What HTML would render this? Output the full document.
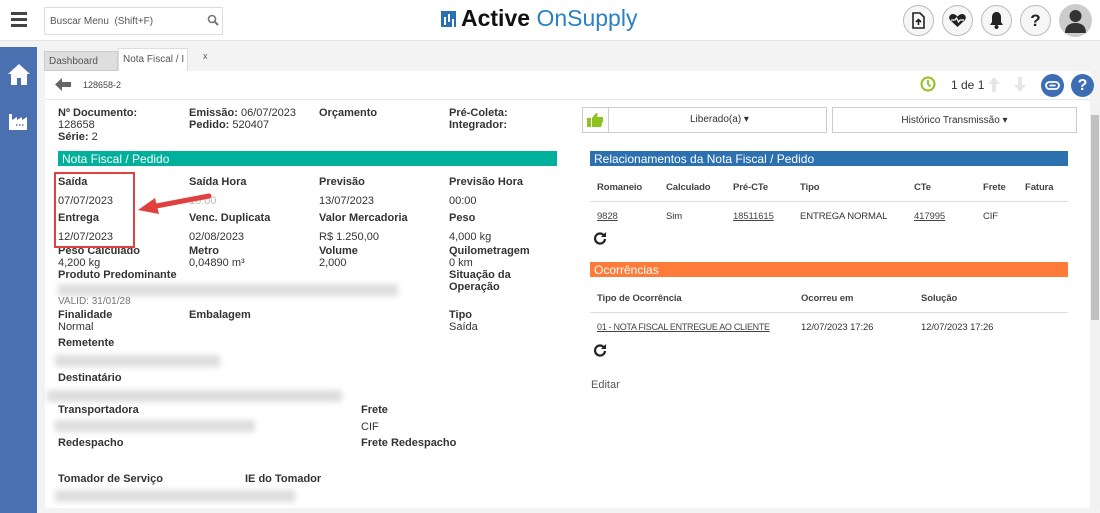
<!DOCTYPE html>
<html><head><meta charset="utf-8"><style>
*{margin:0;padding:0;box-sizing:border-box}
body{width:1100px;height:513px;overflow:hidden;background:#f3f3f3;font-family:"Liberation Sans",sans-serif;font-size:11px;color:#333;position:relative}
.a{position:absolute;white-space:nowrap}
.b{font-weight:bold}
.blur{position:absolute;height:12px;background:#ddd;filter:blur(3px)}
u{color:#444}
.t{font-size:9.5px;letter-spacing:-0.1px}
</style></head><body>
<div class="a" style="left:0;top:0;width:1100px;height:41px;background:#fff;border-bottom:1px solid #e4e4e4"></div>
<div class="a" style="left:11px;top:12px;width:16px;height:3px;background:#444;box-shadow:0 6px 0 #444,0 12px 0 #444"></div>
<div class="a" style="left:44px;top:7px;width:179px;height:28px;border:1px solid #ddd;background:#fff;font-size:10px;color:#555;padding:8px 5px">Buscar Menu&nbsp; (Shift+F)</div>
<svg class="a" style="left:207px;top:14px" width="12" height="12" viewBox="0 0 12 12"><circle cx="5" cy="5" r="3.5" stroke="#777" stroke-width="1.6" fill="none"/><path d="M7.5 7.5L11 11" stroke="#777" stroke-width="2"/></svg>
<div class="a" style="left:441px;top:11px;width:15px;height:16px;background:#2a6fb3"></div>
<div class="a" style="left:444px;top:17px;width:2px;height:8px;background:#fff;box-shadow:4px -3px 0 #fff,8px 2px 0 #fff"></div>
<div class="a" style="left:461px;top:5px;font-size:23px;color:#111"><b>Active</b> <span style="color:#2a80c3">OnSupply</span></div>
<div class="a" style="left:903px;top:5px;width:31px;height:31px;border-radius:50%;border:1px solid #bbb;background:#f6f6f6"></div>
<svg class="a" style="left:912px;top:12px" width="13" height="17" viewBox="0 0 13 17"><path d="M1 1h7l4 4v11H1z" fill="none" stroke="#222" stroke-width="1.6"/><path d="M6.5 13V8M4 10l2.5-2.5L9 10" stroke="#222" stroke-width="1.6" fill="none"/></svg>
<div class="a" style="left:942px;top:5px;width:31px;height:31px;border-radius:50%;border:1px solid #bbb;background:#f6f6f6"></div>
<svg class="a" style="left:948px;top:13px" width="19" height="15" viewBox="0 0 19 15"><path d="M9.5 14L2 7C0 4 2 1 5 1c2 0 3.5 1.5 4.5 2.5C10.5 2.5 12 1 14 1c3 0 5 3 3 6z" fill="#222"/><path d="M3 7h4l1.5-2 2 4 1.5-2h4" stroke="#fff" stroke-width="1.2" fill="none"/></svg>
<div class="a" style="left:981px;top:5px;width:31px;height:31px;border-radius:50%;border:1px solid #bbb;background:#f6f6f6"></div>
<svg class="a" style="left:989px;top:11px" width="15" height="19" viewBox="0 0 15 19"><path d="M7.5 1c3 0 4.5 2.5 4.5 5v5l2 3H1l2-3V6c0-2.5 1.5-5 4.5-5z" fill="#222"/><circle cx="7.5" cy="16" r="2" fill="#222"/></svg>
<div class="a" style="left:1020px;top:5px;width:31px;height:31px;border-radius:50%;border:1px solid #bbb;background:#f6f6f6;font-weight:bold;font-size:17px;text-align:center;line-height:29px;color:#222">?</div>
<div class="a" style="left:1059px;top:4px;width:33px;height:33px;border-radius:50%;background:#ccc"></div>
<svg class="a" style="left:1064px;top:8px" width="23" height="26" viewBox="0 0 23 26"><circle cx="11.5" cy="8" r="6" fill="#333"/><path d="M1 25c0-7 4-10 10.5-10S22 18 22 25z" fill="#333"/></svg>

<div class="a" style="left:0;top:47px;width:37px;height:466px;background:#4a70af"></div>
<svg class="a" style="left:7px;top:62px" width="24" height="25" viewBox="0 0 24 25"><path d="M12 2L1 12h3v11h6v-7h4v7h6V12h3z" fill="#fff"/></svg>
<svg class="a" style="left:8px;top:110px" width="21" height="21" viewBox="0 0 21 21"><path d="M1 20V4h3v6l5-3v3l5-3v3l5-3v13z" fill="#fff"/><path d="M8 15h1.5M11 15h1.5M14 15h1.5" stroke="#4a70af" stroke-width="1.5"/></svg>

<div class="a" style="left:44px;top:51px;width:74px;height:20px;background:#dedede;border:1px solid #ccc;font-size:10px;color:#555;padding:4px 4px">Dashboard</div>
<div class="a" style="left:118px;top:48px;width:70px;height:24px;background:#fff;border:1px solid #ddd;border-bottom:none;font-size:10px;color:#555;padding:5px 4px;overflow:hidden">Nota Fiscal / I <span style="font-size:8px">x</span></div>
<div class="a" style="left:203px;top:51px;font-size:9px;color:#555">x</div>

<div class="a" style="left:45px;top:71px;width:1045px;height:437px;background:#fff"></div>
<div class="a" style="left:45px;top:99px;width:1045px;height:1px;background:#e6e6e6"></div>
<svg class="a" style="left:55px;top:77px" width="17" height="15" viewBox="0 0 17 15"><path d="M0 7.5L7 1v4h9v5H7v4z" fill="#666"/></svg>
<div class="a" style="left:83px;top:80px;font-size:9px;color:#444">128658-2</div>
<svg class="a" style="left:920px;top:76px" width="16" height="16" viewBox="0 0 16 16"><circle cx="8" cy="8" r="6.5" fill="none" stroke="#8dc21f" stroke-width="2"/><path d="M8 4v4l2.5 2.5" stroke="#8dc21f" stroke-width="1.8" fill="none"/></svg>
<div class="a" style="left:951px;top:78px;font-size:12px;color:#333">1 de 1</div>
<svg class="a" style="left:987px;top:76px" width="40" height="17" viewBox="0 0 40 17"><path d="M7 1L1 8h4v8h4V8h4z" fill="#e6e6e6"/><path d="M33 16l6-7h-4V1h-4v8h-4z" fill="#e6e6e6"/></svg>
<div class="a" style="left:1041px;top:74px;width:23px;height:23px;border-radius:50%;background:#3d6db5"></div>
<svg class="a" style="left:1045px;top:81px" width="15" height="9" viewBox="0 0 15 9"><rect x="1" y="1" width="13" height="7" rx="3.5" fill="none" stroke="#fff" stroke-width="1.8"/><path d="M4.5 4.5h6" stroke="#fff" stroke-width="1.8"/></svg>
<div class="a" style="left:1071px;top:74px;width:23px;height:23px;border-radius:50%;background:#3d6db5;color:#fff;font-weight:bold;font-size:16px;text-align:center;line-height:23px">?</div>

<div class="a" style="left:1090px;top:103px;width:10px;height:405px;background:#f1f1f1"></div>
<div class="a" style="left:1091px;top:115px;width:8px;height:205px;background:#c1c1c1"></div>

<div class="a b" style="left:58px;top:107px;line-height:12px">Nº Documento:<br><span style="font-weight:normal">128658</span><br>Série: <span style="font-weight:normal">2</span></div>
<div class="a" style="left:189px;top:107px;line-height:12px"><b>Emissão:</b> 06/07/2023<br><b>Pedido:</b> 520407</div>
<div class="a b" style="left:319px;top:107px">Orçamento</div>
<div class="a b" style="left:449px;top:107px;line-height:12px">Pré-Coleta:<br>Integrador:</div>

<div class="a" style="left:58px;top:151px;width:499px;height:15px;background:#00b09a;color:#fff;font-size:12px;padding:1px 4px">Nota Fiscal / Pedido</div>

<div class="a b" style="left:58px;top:176px">Saída</div><div class="a b" style="left:189px;top:176px">Saída Hora</div><div class="a b" style="left:319px;top:176px">Previsão</div><div class="a b" style="left:449px;top:176px">Previsão Hora</div>
<div class="a" style="left:58px;top:195px">07/07/2023</div><div class="a" style="left:189px;top:195px;color:#bbb">10:00</div><div class="a" style="left:319px;top:195px">13/07/2023</div><div class="a" style="left:449px;top:195px">00:00</div>
<div class="a b" style="left:58px;top:212px">Entrega</div><div class="a b" style="left:189px;top:212px">Venc. Duplicata</div><div class="a b" style="left:319px;top:212px">Valor Mercadoria</div><div class="a b" style="left:449px;top:212px">Peso</div>
<div class="a" style="left:58px;top:231px">12/07/2023</div><div class="a" style="left:189px;top:231px">02/08/2023</div><div class="a" style="left:319px;top:231px">R$ 1.250,00</div><div class="a" style="left:449px;top:231px">4,000 kg</div>
<div class="a" style="left:58px;top:245px;line-height:12px"><b>Peso Calculado</b><br>4,200 kg<br><b>Produto Predominante</b></div>
<div class="a" style="left:189px;top:245px;line-height:12px"><b>Metro</b><br>0,04890 m³</div>
<div class="a" style="left:319px;top:245px;line-height:12px"><b>Volume</b><br>2,000</div>
<div class="a" style="left:449px;top:245px;line-height:12px"><b>Quilometragem</b><br>0 km<br><b>Situação da<br>Operação</b></div>
<div class="blur" style="left:58px;top:284px;width:340px;height:12px"></div>
<div class="a" style="left:58px;top:296px;color:#777;font-size:10px;height:9px;overflow:hidden">VALID: 31/01/28</div>
<div class="a" style="left:58px;top:309px;line-height:12px"><b>Finalidade</b><br>Normal</div>
<div class="a b" style="left:189px;top:309px">Embalagem</div>
<div class="a" style="left:449px;top:309px;line-height:12px"><b>Tipo</b><br>Saída</div>
<div class="a b" style="left:58px;top:337px">Remetente</div>
<div class="blur" style="left:55px;top:355px;width:165px"></div>
<div class="a b" style="left:58px;top:372px">Destinatário</div>
<div class="blur" style="left:47px;top:390px;width:295px"></div>
<div class="a b" style="left:58px;top:404px">Transportadora</div><div class="a b" style="left:361px;top:404px">Frete</div>
<div class="blur" style="left:55px;top:420px;width:200px"></div>
<div class="a" style="left:361px;top:421px">CIF</div>
<div class="a b" style="left:58px;top:437px">Redespacho</div><div class="a b" style="left:361px;top:437px">Frete Redespacho</div>
<div class="a b" style="left:58px;top:473px">Tomador de Serviço</div><div class="a b" style="left:245px;top:473px">IE do Tomador</div>
<div class="blur" style="left:55px;top:490px;width:240px"></div>

<div class="a" style="left:54px;top:172px;width:81px;height:76px;border:2px solid #e0403e"></div>
<svg class="a" style="left:135px;top:190px" width="80" height="30" viewBox="0 0 80 30"><path d="M74 6L16 17" stroke="#e0403e" stroke-width="5" stroke-linecap="round"/><path d="M3 20L20 8l4 16z" fill="#e0403e"/></svg>

<div class="a" style="left:582px;top:107px;width:245px;height:26px;border:1px solid #ccc"></div>
<div class="a" style="left:608px;top:107px;width:1px;height:26px;background:#ccc"></div>
<svg class="a" style="left:587px;top:112px" width="17" height="15" viewBox="0 0 17 15"><rect x="0" y="6" width="4" height="9" fill="#8dc21f"/><path d="M5 6l4-5c2 0 2 2 1 4h6v4l-2 6H5z" fill="#8dc21f"/></svg>
<div class="a" style="left:690px;top:114px;font-size:10px">Liberado(a) ▾</div>
<div class="a" style="left:832px;top:107px;width:245px;height:26px;border:1px solid #ccc;font-size:10px;text-align:center;padding-top:7px">Histórico Transmissão ▾</div>

<div class="a" style="left:590px;top:151px;width:478px;height:15px;background:#2d70b0;color:#fff;font-size:12px;padding:1px 4px">Relacionamentos da Nota Fiscal / Pedido</div>
<div class="a b t" style="left:597px;top:182px;color:#444">Romaneio</div>
<div class="a b t" style="left:666px;top:182px;color:#444">Calculado</div>
<div class="a b t" style="left:733px;top:182px;color:#444">Pré-CTe</div>
<div class="a b t" style="left:800px;top:182px;color:#444">Tipo</div>
<div class="a b t" style="left:914px;top:182px;color:#444">CTe</div>
<div class="a b t" style="left:983px;top:182px;color:#444">Frete</div>
<div class="a b t" style="left:1025px;top:182px;color:#444">Fatura</div>
<div class="a" style="left:590px;top:201px;width:478px;height:1px;background:#ddd"></div>
<div class="a t" style="left:597px;top:211px"><u>9828</u></div>
<div class="a t" style="left:666px;top:211px">Sim</div>
<div class="a t" style="left:733px;top:211px"><u>18511615</u></div>
<div class="a t" style="left:800px;top:211px">ENTREGA NORMAL</div>
<div class="a t" style="left:914px;top:211px"><u>417995</u></div>
<div class="a t" style="left:983px;top:211px">CIF</div>
<svg class="a" style="left:593px;top:231px" width="14" height="14" viewBox="0 0 14 14"><path d="M11 4.5A5 5 0 1 0 12 8" fill="none" stroke="#222" stroke-width="2.2"/><path d="M13 1v5H8z" fill="#222"/></svg>

<div class="a" style="left:590px;top:262px;width:478px;height:15px;background:#fe7b39;color:#fff;font-size:12px;padding:1px 4px">Ocorrências</div>
<div class="a b t" style="left:597px;top:293px;color:#444">Tipo de Ocorrência</div>
<div class="a b t" style="left:801px;top:293px;color:#444">Ocorreu em</div>
<div class="a b t" style="left:921px;top:293px;color:#444">Solução</div>
<div class="a" style="left:590px;top:312px;width:478px;height:1px;background:#ddd"></div>
<div class="a" style="left:597px;top:322px;font-size:9px;letter-spacing:-0.3px;width:200px;overflow:hidden"><u>01 - NOTA FISCAL ENTREGUE AO CLIENTE</u></div>
<div class="a t" style="left:801px;top:322px">12/07/2023 17:26</div>
<div class="a t" style="left:921px;top:322px">12/07/2023 17:26</div>
<svg class="a" style="left:593px;top:343px" width="14" height="14" viewBox="0 0 14 14"><path d="M11 4.5A5 5 0 1 0 12 8" fill="none" stroke="#222" stroke-width="2.2"/><path d="M13 1v5H8z" fill="#222"/></svg>
<div class="a" style="left:591px;top:379px;color:#555">Editar</div>
</body></html>
